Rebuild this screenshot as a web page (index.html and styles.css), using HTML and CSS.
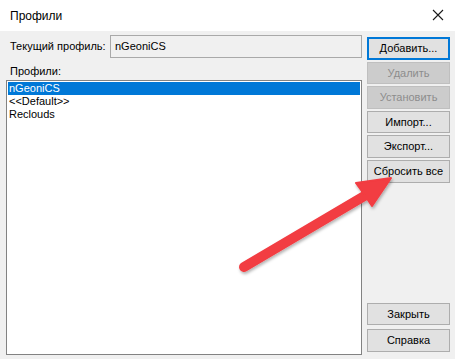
FILE: index.html
```html
<!DOCTYPE html>
<html lang="ru">
<head>
<meta charset="utf-8">
<link rel="stylesheet" href="styles.css">
</head>
<body>
<div class="window">
  <div class="titlebar">
    <span class="title">Профили</span>
    <svg class="close" width="12" height="12" viewBox="0 0 12 12"><path d="M1 1L11 11M11 1L1 11" stroke="#1a1a1a" stroke-width="1.1" fill="none"/></svg>
  </div>
  <div class="content">
    <div class="left">
      <div class="current">
        <span class="label">Текущий профиль:</span>
        <div class="textbox">nGeoniCS</div>
      </div>
      <div class="label list-label">Профили:</div>
      <div class="listbox">
        <div class="item selected">nGeoniCS</div>
        <div class="item">&lt;&lt;Default&gt;&gt;</div>
        <div class="item">Reclouds</div>
      </div>
    </div>
    <div class="right">
      <div class="btn default">Добавить...</div>
      <div class="btn disabled">Удалить</div>
      <div class="btn disabled">Установить</div>
      <div class="btn">Импорт...</div>
      <div class="btn">Экспорт...</div>
      <div class="btn">Сбросить все</div>
      <div class="spacer"></div>
      <div class="btn">Закрыть</div>
      <div class="btn last">Справка</div>
    </div>
  </div>
  <svg class="arrow" width="455" height="359" viewBox="0 0 455 359">
    <defs>
      <filter id="sh" x="-20%" y="-20%" width="140%" height="140%">
        <feDropShadow dx="1" dy="2" stdDeviation="1.5" flood-color="#000" flood-opacity="0.3"/>
      </filter>
    </defs>
    <g filter="url(#sh)" fill="#f23c42" stroke="#f23c42">
      <line x1="244" y1="267" x2="366" y2="195" stroke-width="10" stroke-linecap="round"/>
      <path d="M391 178 L356 183 L364 194 L372 206 Z" stroke-width="2" stroke-linejoin="round"/>
    </g>
  </svg>
</div>
</body>
</html>
```
FILE: styles.css
```css
* { box-sizing: border-box; }
html, body { margin: 0; padding: 0; }
body {
  font-family: "Liberation Sans", Arial, sans-serif;
  font-size: 11px;
  color: #000;
  background: #f0f0f0;
}
.window {
  position: relative;
  width: 455px;
  height: 359px;
  background: #f0f0f0;
  overflow: hidden;
  display: flex;
  flex-direction: column;
}
.titlebar {
  height: 31px;
  background: #fff;
  display: flex;
  align-items: center;
  justify-content: space-between;
  padding: 0 11px 0 10px;
  flex: none;
}
.title { font-size: 12px; color: #000; }
.close { display: block; margin-top: -1px; }
.content {
  flex: 1;
  display: flex;
  padding: 4px 5px 4px 6px;
  gap: 5px;
}
.left {
  width: 356px;
  display: flex;
  flex-direction: column;
}
.current {
  display: flex;
  align-items: center;
  height: 23px;
}
.label { padding-left: 4px; line-height: 15px; white-space: nowrap; }
.current .label { width: 104px; flex: none; }
.textbox {
  flex: 1;
  height: 23px;
  border: 1px solid #a9a9a9;
  background: #f0f0f0;
  padding: 0 4px;
  line-height: 21px;
}
.list-label { margin-top: 6px; height: 16px; }
.listbox {
  flex: 1;
  margin-top: 0;
  border: 1px solid #828282;
  background: #fff;
  padding: 1px;
}
.item {
  line-height: 13px;
  height: 13px;
  padding-left: 1px;
  white-space: nowrap;
}
.item.selected { background: #0078d7; color: #fff; }
.right {
  width: 83px;
  display: flex;
  flex-direction: column;
  padding-top: 2px;
  padding-bottom: 3px;
  gap: 2px;
}
.btn {
  height: 22.6px;
  border: 1px solid #adadad;
  background: #e1e1e1;
  text-align: center;
  line-height: 20px;
  white-space: nowrap;
}
.btn.last { margin-top: 2px; }
.btn.default { border: 2px solid #0078d7; line-height: 18px; }
.btn.disabled { background: #cccccc; border-color: #bfbfbf; color: #8c8c8c; }
.spacer { flex: 1; }
.arrow {
  position: absolute;
  left: 0;
  top: 0;
  pointer-events: none;
}
```
